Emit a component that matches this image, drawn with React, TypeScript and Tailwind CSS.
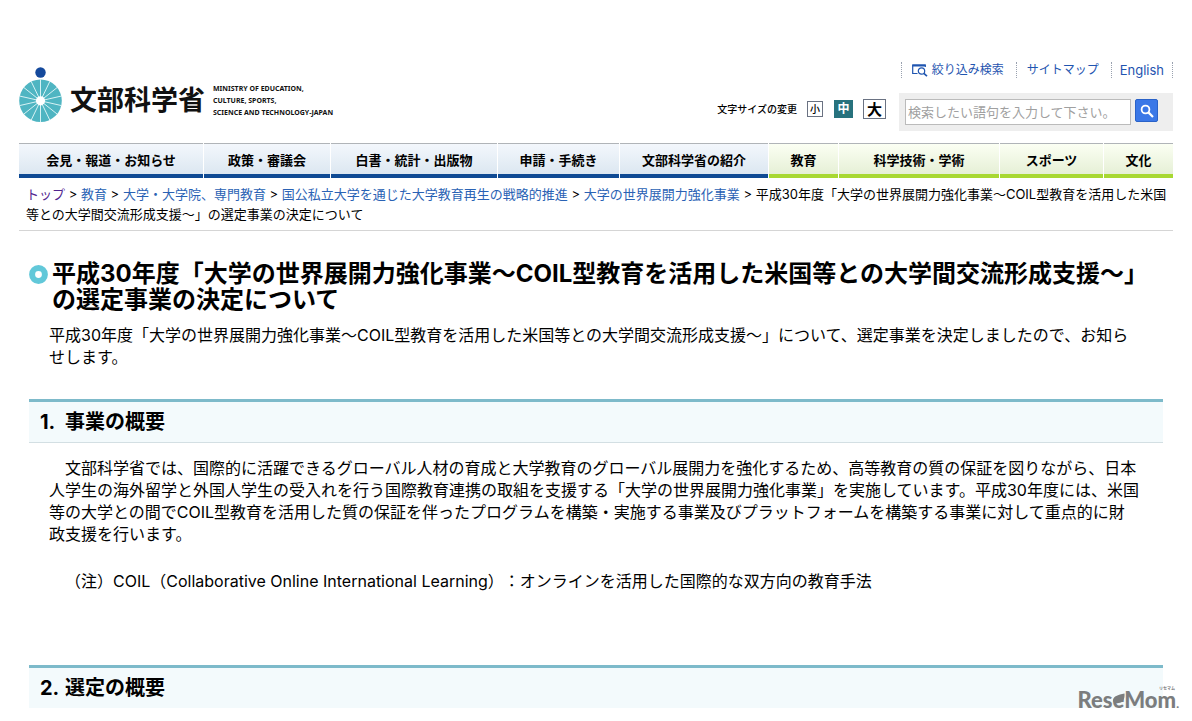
import { ReactNode } from 'react'

const navItems = [
  { label: '会見・報道・お知らせ', green: false },
  { label: '政策・審議会', green: false },
  { label: '白書・統計・出版物', green: false },
  { label: '申請・手続き', green: false },
  { label: '文部科学省の紹介', green: false },
  { label: '教育', green: true },
  { label: '科学技術・学術', green: true },
  { label: 'スポーツ', green: true },
  { label: '文化', green: true },
]

const crumbs = [
  { label: 'トップ', visited: true },
  { label: '教育', visited: false },
  { label: '大学・大学院、専門教育', visited: false },
  { label: '国公私立大学を通じた大学教育再生の戦略的推進', visited: false },
  { label: '大学の世界展開力強化事業', visited: false },
]

const spokes = Array.from({ length: 14 }, (_, i) => (i * 2 * Math.PI) / 14)

function Logo() {
  return (
    <a href="#" className="mt-[5px] flex items-center text-[#111]">
      <svg width="43" height="56" viewBox="0 0 43 56" aria-hidden="true">
        <circle cx="21.5" cy="5.5" r="5.2" fill="#14499c" />
        <circle cx="21.5" cy="33.8" r="21.3" fill="#4fb5c2" />
        {spokes.map((a) => (
          <line
            key={a}
            x1="21.5"
            y1="33.8"
            x2={21.5 + 21.5 * Math.sin(a)}
            y2={33.8 - 21.5 * Math.cos(a)}
            stroke="#e6f8f9"
            strokeWidth="0.9"
          />
        ))}
        <circle cx="21.5" cy="33.8" r="4.6" fill="#fff" />
      </svg>
      <span className="mt-3 ml-2 text-[27px] leading-8 font-bold">文部科学省</span>
      <span className="mt-3 ml-2 font-['Noto_Sans'] text-[7px] leading-3 font-bold whitespace-nowrap">
        MINISTRY OF EDUCATION,
        <br />
        CULTURE, SPORTS,
        <br />
        SCIENCE AND TECHNOLOGY-JAPAN
      </span>
    </a>
  )
}

function UtilityLinks() {
  return (
    <ul className="flex justify-end text-[12px] leading-4 text-[#1f55b0]">
      <li className="border-l border-dotted border-gray-400 pr-3 pl-2.5">
        <a href="#" className="flex items-center gap-1">
          <svg width="16" height="13" viewBox="0 0 16 13" fill="none" stroke="#1f55b0" aria-hidden="true">
            <path d="M5.5 9.5H.7V1h12.600v2" strokeWidth="1.200" />
            <path d="M.5 1.500h13" strokeWidth="2" />
            <circle cx="9.500" cy="7" r="3.200" strokeWidth="1.200" />
            <path d="M11.800 9.300l3.200 2.900" strokeWidth="1.600" />
          </svg>
          絞り込み検索
        </a>
      </li>
      <li className="border-l border-dotted border-gray-400 pr-3 pl-2.5">
        <a href="#">サイトマップ</a>
      </li>
      <li className="border-x border-dotted border-gray-400 px-2 text-[13px]">
        <a href="#">English</a>
      </li>
    </ul>
  )
}

function FontSizeSwitch() {
  return (
    <div className="mr-[13px] flex items-center">
      <span className="mr-2.5 text-[10px] font-medium">文字サイズの変更</span>
      <button className="flex size-4 items-center justify-center border border-gray-500 text-[10px] font-medium">小</button>
      <button className="ml-[11px] flex h-[18px] w-[19px] items-center justify-center bg-[#27727d] text-[12px] font-bold text-white">
        中
      </button>
      <button className="ml-2.5 flex h-5 w-[23px] items-center justify-center border border-gray-500 text-[15px] leading-none font-bold">
        大
      </button>
    </div>
  )
}

function SearchForm() {
  return (
    <form className="flex h-[38px] w-[274px] items-start gap-1 bg-[#eee] px-1.5 pt-1.5">
      <input
        type="text"
        aria-label="サイト内検索"
        placeholder="検索したい語句を入力して下さい。"
        className="h-[26px] w-[226px] border border-[#bbb] bg-white px-0.5 text-[13px] placeholder:text-[#a0a0a0]"
      />
      <button
        type="submit"
        aria-label="検索"
        className="flex h-[23px] w-[23px] items-center justify-center rounded-xs border border-[#2a62c8] bg-[#3b78e7]"
      >
        <svg width="14" height="14" viewBox="0 0 14 14" fill="none" stroke="#fff" aria-hidden="true">
          <circle cx="5.500" cy="5.500" r="3.900" strokeWidth="1.800" />
          <path d="M8.400 8.400l4.600 4.600" strokeWidth="2.200" />
        </svg>
      </button>
    </form>
  )
}

function SectionHeading({ no, children }: { no: string; children: ReactNode }) {
  return (
    <h2 className="flex border-t-3 border-[#7dbaca] bg-[#f3fafc] pl-[11px] text-[20px] leading-10 font-bold">
      <span className="w-[25px]">{no}</span>
      <span>{children}</span>
    </h2>
  )
}

function Watermark() {
  return (
    <div className="absolute -right-4 -bottom-2.5 flex items-baseline font-['Lato'] text-[22px] leading-7 font-black text-[#7b7d7e]">
      <span>Res</span>
      <span className="relative">
        e
        <svg className="absolute bottom-2 left-0" width="13" height="13" viewBox="0 0 13 13" aria-hidden="true">
          <path d="M1 8C1 3 6 2 12.500.5C13 6 11 10 6.500 10C4 10.500 2 10 1 8z" fill="#7b7d7e" />
        </svg>
      </span>
      <span>Mom</span>
      <span className="text-[12px]">.</span>
      <span className="absolute top-0 right-1 font-['Noto_Sans_CJK_JP'] text-[4px] leading-none font-bold">リセマム</span>
    </div>
  )
}

export default function App() {
  return (
    <div className="bg-white px-[19px] pt-[62px] font-['Inter','Noto_Sans_CJK_JP',sans-serif] text-black [text-spacing-trim:space-all]">
      <header>
        <div className="flex items-start justify-between">
          <Logo />
          <div className="flex flex-col gap-[15px]">
            <UtilityLinks />
            <div className="flex items-start">
              <div className="pt-1.5">
                <FontSizeSwitch />
              </div>
              <SearchForm />
            </div>
          </div>
        </div>
        <nav className="mt-3">
          <ul className="grid grid-cols-[184fr_126fr_166fr_121fr_148fr_69fr_160fr_103fr_69fr] gap-px text-[13px] font-bold">
            {navItems.map((item) => (
              <li key={item.label}>
                <a
                  href="#"
                  className={`flex h-[35px] items-center justify-center border-t border-b-4 border-t-[#b0b4b8] pt-1 whitespace-nowrap ${
                    item.green
                      ? 'border-b-[#a8d832] bg-linear-to-b from-[#fbfff3] to-[#e6f0d6]'
                      : 'border-b-[#0f4a94] bg-linear-to-b from-[#f3f7fc] to-[#dce7f1]'
                  }`}
                >
                  {item.label}
                </a>
              </li>
            ))}
          </ul>
        </nav>
        <nav className="border-b border-[#d5d5d5] py-1.5 pr-1.5 pl-[7px] text-[13px] leading-5">
          {crumbs.map((crumb) => (
            <span key={crumb.label}>
              <a href="#" className={crumb.visited ? 'text-[#51258f]' : 'text-[#2a62b4]'}>
                {crumb.label}
              </a>
              {' > '}
            </span>
          ))}
          平成30年度「大学の世界展開力強化事業～COIL型教育を活用した米国
          <wbr />
          等との大学間交流形成支援～」の選定事業の決定について
        </nav>
      </header>

      <main className="px-2.5 pt-[30px]">
        <div className="flex items-start">
          <svg className="mt-1 mr-1 shrink-0" width="19" height="19" viewBox="0 0 19 19" aria-hidden="true">
            <circle cx="9.500" cy="9.500" r="6.400" fill="none" stroke="#62c8d9" strokeWidth="6" />
          </svg>
          <h1 className="text-[24px] leading-[26px] font-bold">
            平成30年度「大学の世界展開力強化事業～COIL型教育を活用した米国等との大学間交流形成支援～」の選定事業の決定について
          </h1>
        </div>
        <p className="mt-[11px] pr-6 pl-5 text-[16px] leading-[22px]">
          平成30年度「大学の世界展開力強化事業～COIL型教育を活用した米国等との大学間交流形成支援～」について、選定事業を決定しましたので、お知らせします。
        </p>

        <section className="mt-[31px]">
          <div className="border-b border-[#d3dfe3]">
            <SectionHeading no="1.">事業の概要</SectionHeading>
          </div>
          <div className="px-5 pt-3.5 text-[16px] leading-[22px]">
            <p className="indent-4">
              文部科学省では、国際的に活躍できるグローバル人材の育成と大学教育のグローバル展開力を強化するため、高等教育の質の保証を図りながら、日本人学生の海外留学と外国人学生の受入れを行う国際教育連携の取組を支援する「大学の世界展開力強化事業」を実施しています。平成30年度には、米国等の大学との間でCOIL型教育を活用した質の保証を伴ったプログラムを構築・実施する事業及びプラットフォームを構築する事業に対して重点的に財
              <wbr />
              <span className="inline-block indent-0">政支援を行います。</span>
            </p>
            <p className="mt-[25px] indent-4">
              （注）COIL（Collaborative Online International Learning）：オンラインを活用した国際的な双方向の教育手法
            </p>
          </div>
        </section>

        <section className="relative mt-[73px]">
          <SectionHeading no="2.">選定の概要</SectionHeading>
          <Watermark />
        </section>
      </main>
    </div>
  )
}
